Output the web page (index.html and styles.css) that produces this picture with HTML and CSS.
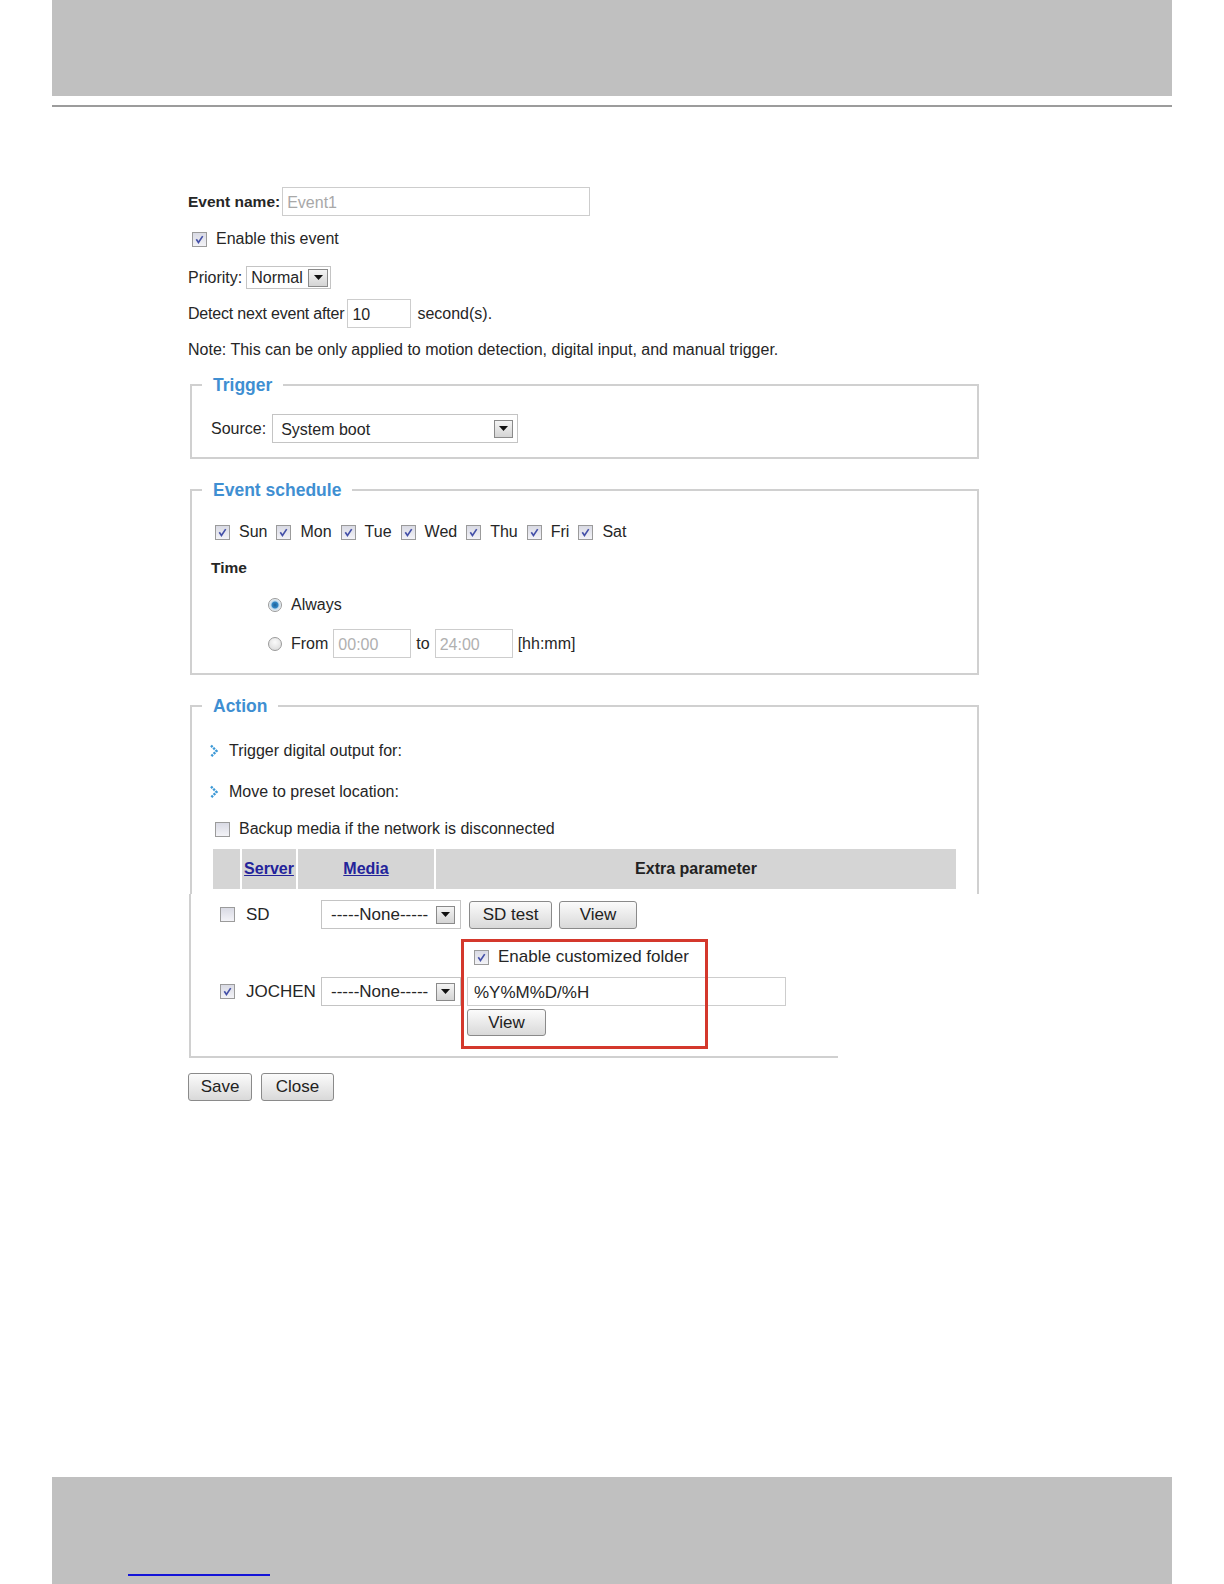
FILE: index.html
```html
<!DOCTYPE html>
<html lang="en">
<head>
    <meta charset="UTF-8">
    <title>Event settings</title>
    <link rel="stylesheet" href="styles.css">
</head>
<body>
<div class="page">
    <div class="top-bar"></div>
    <div class="top-rule"></div>

    <div class="main">
        <div class="row row-name">
            <b class="label-strong">Event name:</b>
            <input class="text-in name-in" type="text" value="Event1">
        </div>
        <div class="row row-enable">
            <span class="cb on"><svg viewBox="0 0 15 15"><path d="M3.8 7.2 6.3 11 11.2 3.6"/></svg></span>
            <span>Enable this event</span>
        </div>
        <div class="row row-priority">
            <span>Priority:</span>
            <span class="sel sel-priority">Normal<span class="arrow"><svg viewBox="0 0 9 5"><path d="M0 0h9L4.5 5z"/></svg></span></span>
        </div>
        <div class="row row-detect">
            <span class="detect-label">Detect next event after</span>
            <input class="text-in detect-in" type="text" value="10">
            <span class="after-in">second(s).</span>
        </div>
        <div class="row row-note">Note: This can be only applied to motion detection, digital input, and manual trigger.</div>

        <fieldset class="box box-trigger">
            <legend>Trigger</legend>
            <div class="row source-row">
                <span>Source:</span>
                <span class="sel sel-source">System boot<span class="arrow"><svg viewBox="0 0 9 5"><path d="M0 0h9L4.5 5z"/></svg></span></span>
            </div>
        </fieldset>

        <fieldset class="box box-schedule">
            <legend>Event schedule</legend>
            <div class="days">
                <label class="day"><span class="cb on"><svg viewBox="0 0 15 15"><path d="M3.8 7.2 6.3 11 11.2 3.6"/></svg></span>Sun</label>
                <label class="day"><span class="cb on"><svg viewBox="0 0 15 15"><path d="M3.8 7.2 6.3 11 11.2 3.6"/></svg></span>Mon</label>
                <label class="day"><span class="cb on"><svg viewBox="0 0 15 15"><path d="M3.8 7.2 6.3 11 11.2 3.6"/></svg></span>Tue</label>
                <label class="day"><span class="cb on"><svg viewBox="0 0 15 15"><path d="M3.8 7.2 6.3 11 11.2 3.6"/></svg></span>Wed</label>
                <label class="day"><span class="cb on"><svg viewBox="0 0 15 15"><path d="M3.8 7.2 6.3 11 11.2 3.6"/></svg></span>Thu</label>
                <label class="day"><span class="cb on"><svg viewBox="0 0 15 15"><path d="M3.8 7.2 6.3 11 11.2 3.6"/></svg></span>Fri</label>
                <label class="day"><span class="cb on"><svg viewBox="0 0 15 15"><path d="M3.8 7.2 6.3 11 11.2 3.6"/></svg></span>Sat</label>
            </div>
            <div class="time-title">Time</div>
            <div class="row radio-row always-row">
                <span class="radio on"></span>
                <span>Always</span>
            </div>
            <div class="row radio-row from-row">
                <span class="radio"></span>
                <span>From</span>
                <input class="text-in time-in" type="text" value="00:00">
                <span>to</span>
                <input class="text-in time-in" type="text" value="24:00">
                <span>[hh:mm]</span>
            </div>
        </fieldset>

        <fieldset class="box box-action">
            <legend>Action</legend>
            <div class="row act-row act-first">
                <svg class="more" viewBox="0 0 10 16"><path d="M2 2.5 7.5 8 2 13.5"/></svg>
                <span>Trigger digital output for:</span>
            </div>
            <div class="row act-row act-second">
                <svg class="more" viewBox="0 0 10 16"><path d="M2 2.5 7.5 8 2 13.5"/></svg>
                <span>Move to preset location:</span>
            </div>
            <div class="row backup-row">
                <span class="cb"></span>
                <span>Backup media if the network is disconnected</span>
            </div>
            <table class="media-table">
                <tr>
                    <th class="c-check"></th>
                    <th class="c-server"><a href="#">Server</a></th>
                    <th class="c-media"><a href="#">Media</a></th>
                    <th>Extra parameter</th>
                </tr>
            </table>
        </fieldset>

        <div class="action-lower">
            <div class="server-grid">
                <div class="srv"><span class="cb"></span>SD</div>
                <span class="sel sel-media">-----None-----<span class="arrow"><svg viewBox="0 0 9 5"><path d="M0 0h9L4.5 5z"/></svg></span></span>
                <div class="sd-btns">
                    <button class="btn btn-sdtest">SD test</button>
                    <button class="btn btn-view">View</button>
                </div>

                <div class="srv"><span class="cb on"><svg viewBox="0 0 15 15"><path d="M3.8 7.2 6.3 11 11.2 3.6"/></svg></span>JOCHEN</div>
                <span class="sel sel-media">-----None-----<span class="arrow"><svg viewBox="0 0 9 5"><path d="M0 0h9L4.5 5z"/></svg></span></span>
                <div class="folder">
                    <div class="row folder-check">
                        <span class="cb on"><svg viewBox="0 0 15 15"><path d="M3.8 7.2 6.3 11 11.2 3.6"/></svg></span>
                        <span>Enable customized folder</span>
                    </div>
                    <input class="text-in folder-in" type="text" value="%Y%M%D/%H">
                    <button class="btn btn-view2">View</button>
                </div>
            </div>
            <div class="mark"></div>
        </div>

        <div class="bottom-btns">
            <button class="btn btn-save">Save</button>
            <button class="btn btn-close">Close</button>
        </div>
    </div>

    <div class="bottom-bar"><span class="page-link"></span></div>
</div>
</body>
</html>
```
FILE: styles.css
```css
*{
    margin: 0;
    padding: 0;
    box-sizing: border-box;
}
body{
    font-family: "Liberation Sans", Arial, sans-serif;
    font-size: 16px;
    color: #262626;
    background: #fff;
}
.page{
    display: flex;
    flex-direction: column;
    min-height: 1584px;
}
.top-bar{
    height: 96px;
    margin: 0 52px;
    background: #c0c0c0;
}
.top-rule{
    height: 2px;
    margin: 9px 52px 0;
    background: #9c9c9c;
}
.main{
    flex: 1;
    padding: 80px 0 0 188px;
}
.bottom-bar{
    height: 107px;
    margin: 0 52px;
    background: #c0c0c0;
    display: flex;
    align-items: flex-end;
    padding: 0 0 8px 76px;
}
.page-link{
    width: 142px;
    border-bottom: 2px solid #1414d8;
}

/* rows */
.row{
    display: flex;
    align-items: center;
    gap: 5px;
}
.label-strong{
    font-size: 15.5px;
}
.row-name{ height: 29px; gap: 2px; }
.row-enable{ height: 20px; margin-top: 13px; padding-left: 4px; gap: 9px; }
.row-priority{ height: 23px; margin-top: 17px; gap: 2px; }
.row-detect{ height: 29px; margin-top: 10px; gap: 3px; }
.row-note{ height: 20px; margin-top: 12px; }
.detect-label{ letter-spacing: -0.2px; }
.after-in{ margin-left: 3px; }

/* controls */
.text-in{
    height: 29px;
    border: 1px solid #cdcdcd;
    font: 16px "Liberation Sans", Arial, sans-serif;
    color: #262626;
    padding: 3px 4px 0;
    outline: none;
}
.name-in{ width: 308px; color: #a8a8a8; }
.detect-in{ width: 64px; }
.time-in{ width: 78px; color: #b0b0b0; }
.folder-in{ width: 319px; height: 29px; font-size: 17px; padding-left: 6px; margin-top: 10px; }

.cb{
    flex: none;
    width: 15px;
    height: 15px;
    border: 1px solid #9b9b9b;
    background: linear-gradient(#d9dae4, #f3f3f7);
    display: inline-flex;
}
.cb svg{
    width: 100%;
    height: 100%;
    fill: none;
    stroke: #4450a8;
    stroke-width: 1.9;
}
.radio{
    flex: none;
    width: 14px;
    height: 14px;
    border-radius: 50%;
    border: 1px solid #9a9a9a;
    background: radial-gradient(circle at 50% 35%, #fafafa, #d6d6d6);
}
.radio.on{
    background: radial-gradient(circle, #1e5f95 0, #2f86c6 3px, #bcd7ea 4px, #eef2f5 6px);
}

.sel{
    position: relative;
    display: inline-flex;
    align-items: center;
    border: 1px solid #c4c4c4;
    background: #fff;
    padding-left: 4px;
}
.sel .arrow{
    position: absolute;
    right: 3px;
    top: 50%;
    margin-top: -9px;
    width: 19px;
    height: 18px;
    border: 1px solid #8a8a8a;
    background: linear-gradient(#f4f4f4, #d4d4d4);
    display: flex;
    align-items: center;
    justify-content: center;
}
.sel .arrow svg{
    width: 9px;
    height: 5px;
    fill: #111;
}
.sel-priority{
    width: 85px;
    height: 23px;
    margin-left: 2px;
}
.sel-priority .arrow{
    right: 2px;
    width: 20px;
}
.sel-source{
    width: 246px;
    height: 29px;
    padding: 3px 0 0 8px;
}
.sel-source .arrow{
    right: 4px;
}
.sel-media{
    width: 140px;
    height: 29px;
    font-size: 17px;
    padding-left: 9px;
}
.sel-media .arrow{
    right: 5px;
}

.btn{
    height: 28px;
    font: 17px "Liberation Sans", Arial, sans-serif;
    color: #222;
    border: 1px solid #8a8a8a;
    border-radius: 3px;
    background: linear-gradient(#fbfbfb, #d9d9d9);
}

/* fieldsets */
.box{
    width: 789px;
    margin: 20px 0 0 2px;
    border: 2px solid #d0d0d0;
}
.box legend{
    margin-left: 10px;
    padding: 0 11px;
    font-size: 17.5px;
    font-weight: bold;
    line-height: 22px;
    color: #3f8fd2;
}
.box-trigger{ margin-top: 14px; }
.source-row{
    height: 29px;
    margin: 18px 0 14px 19px;
}
.source-row .sel{ margin-left: 1px; }

.days{
    display: flex;
    align-items: center;
    gap: 9px;
    height: 20px;
    margin: 21px 0 0 23px;
}
.day{
    display: flex;
    align-items: center;
    gap: 9px;
}
.time-title{
    font-weight: bold;
    font-size: 15.5px;
    line-height: 20px;
    margin: 16px 0 0 19px;
}
.radio-row{ padding-left: 76px; }
.radio-row .radio{ margin-right: 4px; }
.always-row{ height: 20px; margin-top: 17px; }
.from-row{ height: 29px; margin: 14px 0 15px; }

.box-action{ border-bottom: none; }
.act-row{ height: 20px; padding-left: 17px; gap: 10px; }
.act-first{ margin-top: 24px; }
.act-second{ margin-top: 21px; }
.more{
    width: 10px;
    height: 16px;
    fill: none;
    stroke: #3b98d6;
    stroke-width: 2.4;
    stroke-dasharray: 2.2 1;
}
.backup-row{
    height: 20px;
    margin-top: 17px;
    padding-left: 23px;
    gap: 9px;
}
.media-table{
    margin: 10px 0 5px 19px;
    width: 747px;
    border-collapse: separate;
    border-spacing: 2px 0;
}
.media-table th{
    height: 40px;
    background: #d5d5d5;
    font-size: 16px;
    font-weight: bold;
    color: #222;
}
.media-table a{ color: #23239a; }
.c-check{ width: 27px; }
.c-server{ width: 54px; }
.c-media{ width: 136px; }

/* lower part of the action box */
.action-lower{
    position: relative;
    width: 649px;
    margin-left: 1px;
    border-left: 2px solid #d0d0d0;
    border-bottom: 2px solid #d0d0d0;
    padding: 6px 0 20px 29px;
    font-size: 17px;
}
.server-grid{
    display: grid;
    grid-template-columns: 95px 140px auto;
    column-gap: 6px;
    row-gap: 18px;
    align-items: center;
}
.srv{
    display: flex;
    align-items: center;
    gap: 11px;
}
.sd-btns{
    display: flex;
    gap: 7px;
    padding-left: 2px;
}
.btn-sdtest{ width: 83px; }
.btn-view{ width: 78px; }
.folder{ display: flex; flex-direction: column; align-items: flex-start; }
.folder-check{ height: 20px; padding-left: 7px; gap: 9px; }
.btn-view2{ width: 79px; height: 27px; margin-top: 3px; }
.mark{
    position: absolute;
    left: 270px;
    top: 45px;
    width: 247px;
    height: 110px;
    border: 3px solid #d4382c;
}

.bottom-btns{
    display: flex;
    gap: 9px;
    margin-top: 15px;
}
.btn-save{ width: 64px; }
.btn-close{ width: 73px; }
```
